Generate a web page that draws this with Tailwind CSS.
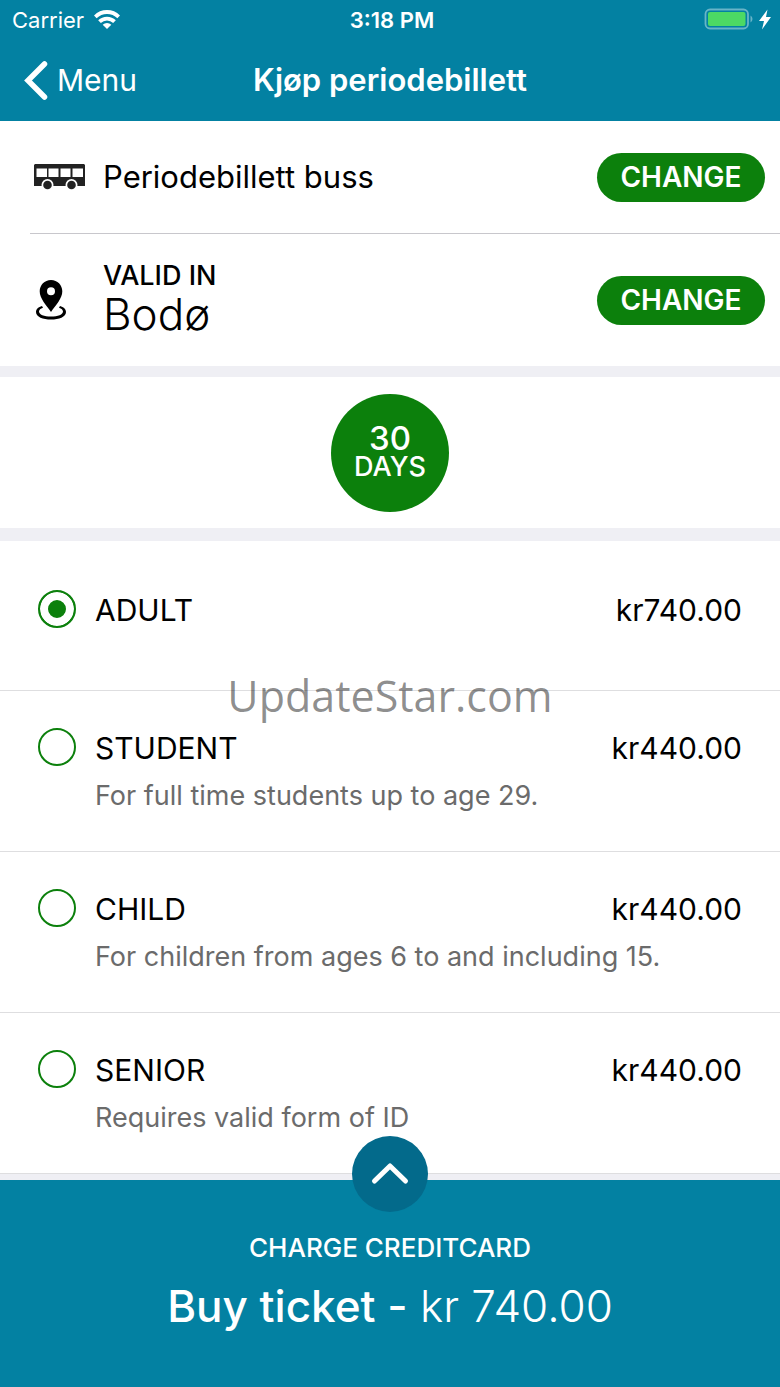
<!DOCTYPE html>
<html lang="en">
<head>
    <meta charset="UTF-8">
    <meta name="viewport" content="width=device-width, initial-scale=1.0">
    <title>Kjøp periodebillett</title>
    <script src="https://cdn.jsdelivr.net/npm/@tailwindcss/browser@4"></script>
</head>
<body class="relative flex min-h-screen flex-col bg-[#efeff4] font-['Inter',sans-serif] text-black">
    <header class="bg-[#0381a2] text-white">
        <div class="grid h-10 grid-cols-3 items-center pr-2 pl-3">
            <div class="flex items-center gap-[10px]">
                <span class="text-[22px]">Carrier</span>
                <svg class="h-5 w-[26px]" viewBox="0 0 26 20" fill="none" stroke="#fff" stroke-width="3.8" aria-label="Wi-Fi">
                    <path d="M1.300 6.800a16.700 16.700 0 0 1 23.400 0"/>
                    <path d="M5.500 11.600a10.700 10.700 0 0 1 15 0"/>
                    <path d="M13 19l-4.300-4.300a6.100 6.100 0 0 1 8.600 0z" fill="#fff" stroke="none"/>
                </svg>
            </div>
            <span class="text-center text-[22px] font-semibold">3:18 PM</span>
            <svg class="h-6 w-[68px] justify-self-end" viewBox="0 0 68 24" aria-label="Battery charging">
                <rect x="1.500" y="1.500" width="42.500" height="19" rx="4.500" fill="none" stroke="#68b4c8" stroke-width="1.800"/>
                <rect x="4" y="4" width="37.500" height="14" rx="2" fill="#4cd964"/>
                <path d="M46.500 7.500v7q2-1 2-3.500t-2-3.500z" fill="#68b4c8"/>
                <path d="M63.500 1.500L55 13h5l-2 8.500L67 9h-5z" fill="#fff"/>
            </svg>
        </div>
        <div class="grid h-[81px] grid-cols-[1fr_auto_1fr] items-center px-6">
            <a href="#" class="flex items-center gap-[9px] text-[30px]">
                <svg class="h-10 w-6" viewBox="0 0 24 40" fill="none" stroke="#fff" stroke-width="5.500" stroke-linecap="round" stroke-linejoin="miter" aria-hidden="true">
                    <path d="M20.500 3L4 19.500 20.500 36"/>
                </svg>
                Menu
            </a>
            <h1 class="text-[31px] font-semibold">Kjøp periodebillett</h1>
        </div>
    </header>

    <section class="bg-white">
        <div class="ml-[30px] flex h-[113px] items-center border-b border-[#c8c7cc] pr-[15px] pl-1">
            <svg class="mr-[18px] h-[26px] w-[51px]" viewBox="0 0 51 26" aria-hidden="true">
                <path d="M1 0h49l1 1v21H0V1z" fill="#222"/>
                <path d="M2.500 4.500h10.500v8.500h-10.500zM14.500 4.500h10v8.500h-10zM26.500 4.500h10v8.500h-10zM38.500 4.500h10.500v8.500h-10.500z" fill="#fff"/>
                <circle cx="13.500" cy="21" r="6" fill="#fff"/>
                <circle cx="37.500" cy="21" r="6" fill="#fff"/>
                <circle cx="13.500" cy="21" r="4.300" fill="#222"/>
                <circle cx="37.500" cy="21" r="4.300" fill="#222"/>
            </svg>
            <span class="flex-1 text-[31px]">Periodebillett buss</span>
            <button type="button" class="h-[49px] w-[168px] rounded-full bg-[#0c800c] text-[28px] font-semibold text-white">CHANGE</button>
        </div>
        <div class="flex h-[132px] items-center pr-[15px] pl-9">
            <svg class="mr-[37px] h-10 w-[30px]" viewBox="0 0 30 40" aria-hidden="true">
                <path fill-rule="evenodd" d="M15 0C8.500 0 3.700 5 3.700 11.300 3.700 18.500 10 25 15 32c5-7 11.300-13.500 11.300-20.700C26.300 5 21.500 0 15 0zm0 7.200a4 4 0 1 1 0 8 4 4 0 0 1 0-8z"/>
                <path d="M6 26C2.500 27 0 29 0 32c0 5 7 7.500 15 7.500S30 37 30 32c0-3-2.500-5-6-6l-1 1.700c2.500.8 4 2.200 4 3.800 0 3-5 5-12 5S3 34.500 3 31.500c0-1.600 1.500-3 4-3.800z"/>
            </svg>
            <div class="flex-1 pb-1">
                <div class="text-[27px] leading-8 font-medium">VALID IN</div>
                <div class="text-[44px] leading-[44px] font-light">Bodø</div>
            </div>
            <button type="button" class="h-[49px] w-[168px] rounded-full bg-[#0c800c] text-[28px] font-semibold text-white">CHANGE</button>
        </div>
    </section>

    <section class="mt-[11px] flex h-[151px] items-center justify-center bg-white">
        <button type="button" class="flex size-[118px] flex-col items-center justify-center rounded-full bg-[#0c800c] pb-0.5 text-white">
            <span class="text-[33px] leading-[30px] font-medium">30</span>
            <span class="text-[27px] leading-7 font-medium">DAYS</span>
        </button>
    </section>

    <form class="mt-[13px] text-[30px]">
        <div class="grid h-[150px] grid-cols-[38px_1fr_auto] content-start gap-x-[19px] border-b border-[#dedee0] bg-white px-[38px] pt-[49px]">
            <input type="radio" name="category" id="adult" checked class="size-[38px] appearance-none rounded-full border-2 border-[#0c800c] bg-white checked:bg-[#0c800c] checked:shadow-[inset_0_0_0_8px_#fff]">
            <label for="adult" class="leading-10">ADULT</label>
            <span class="leading-10">kr740.00</span>
        </div>
        <div class="grid h-[161px] grid-cols-[38px_1fr_auto] content-start gap-x-[19px] gap-y-2 border-b border-[#dedee0] bg-white px-[38px] pt-[37px]">
            <input type="radio" name="category" id="student" aria-describedby="student-note" class="size-[38px] appearance-none rounded-full border-2 border-[#0c800c] bg-white checked:bg-[#0c800c] checked:shadow-[inset_0_0_0_8px_#fff]">
            <label for="student" class="leading-10">STUDENT</label>
            <span class="leading-10">kr440.00</span>
            <p id="student-note" class="col-span-2 col-start-2 text-[27px] leading-10 text-[#6b6b6b]">For full time students up to age 29.</p>
        </div>
        <div class="grid h-[161px] grid-cols-[38px_1fr_auto] content-start gap-x-[19px] gap-y-2 border-b border-[#dedee0] bg-white px-[38px] pt-[37px]">
            <input type="radio" name="category" id="child" aria-describedby="child-note" class="size-[38px] appearance-none rounded-full border-2 border-[#0c800c] bg-white checked:bg-[#0c800c] checked:shadow-[inset_0_0_0_8px_#fff]">
            <label for="child" class="leading-10">CHILD</label>
            <span class="leading-10">kr440.00</span>
            <p id="child-note" class="col-span-2 col-start-2 text-[27px] leading-10 text-[#6b6b6b]">For children from ages 6 to and including 15.</p>
        </div>
        <div class="grid h-[161px] grid-cols-[38px_1fr_auto] content-start gap-x-[19px] gap-y-2 border-b border-[#dedee0] bg-white px-[38px] pt-[37px]">
            <input type="radio" name="category" id="senior" aria-describedby="senior-note" class="size-[38px] appearance-none rounded-full border-2 border-[#0c800c] bg-white checked:bg-[#0c800c] checked:shadow-[inset_0_0_0_8px_#fff]">
            <label for="senior" class="leading-10">SENIOR</label>
            <span class="leading-10">kr440.00</span>
            <p id="senior-note" class="col-span-2 col-start-2 text-[27px] leading-10 text-[#6b6b6b]">Requires valid form of ID</p>
        </div>
    </form>

    <footer class="relative mt-[6px] flex-1 bg-[#0381a2] pt-[52px] text-center text-white">
        <button type="button" aria-label="Show details" class="absolute -top-11 left-1/2 flex size-[76px] -translate-x-1/2 items-center justify-center rounded-full bg-[#036a8b]">
            <svg class="h-6 w-10" viewBox="0 0 40 24" fill="none" stroke="#fff" stroke-width="5" stroke-linecap="round" stroke-linejoin="round" aria-hidden="true">
                <path d="M4.500 19L20 4l15.500 15"/>
            </svg>
        </button>
        <button type="button" class="w-full">
            <span class="block text-[26px] leading-8 font-medium">CHARGE CREDITCARD</span>
            <span class="mt-3 block text-[44px] leading-[60px] font-light"><span class="font-medium">Buy ticket -</span> kr 740.00</span>
        </button>
    </footer>

    <div class="pointer-events-none absolute inset-x-0 top-[664px] text-center font-['Open_Sans',sans-serif] text-[43px] leading-[64px] text-black/45">UpdateStar.com</div>
</body>
</html>
